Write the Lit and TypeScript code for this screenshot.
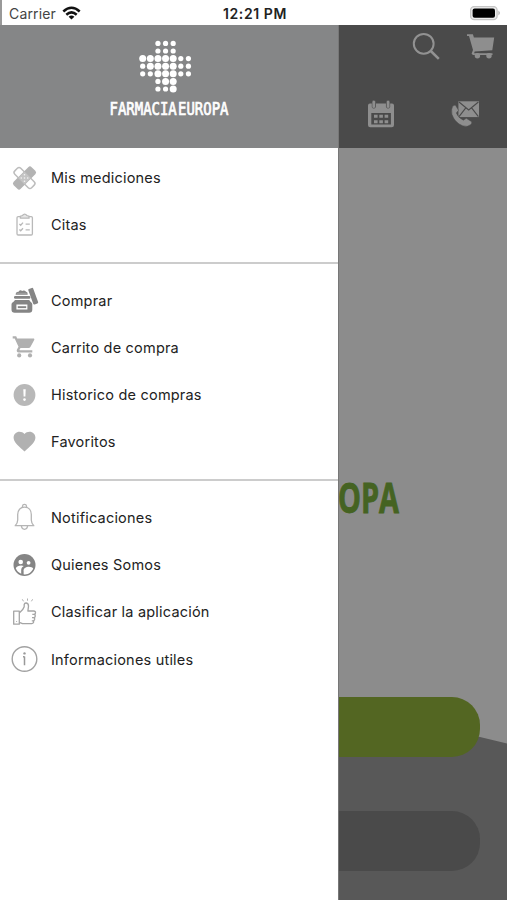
import { LitElement, html, svg, css } from "lit";
import { customElement } from "lit/decorators.js";

const bandage = svg`
  <g transform="rotate(45 16.5 16)" fill="none" stroke="#bdbdbd" stroke-width="1.5"><rect x="4.6" y="11.8" width="23.8" height="8.4" rx="2.4"/></g>
  <g transform="rotate(-45 16.5 16)"><rect x="3.8" y="11" width="25.4" height="10" rx="2.4" fill="#b3b3b3"/><rect x="12" y="11.4" width="9" height="9.2" fill="#c4c4c4"/></g>
  <g fill="#f4f4f4"><circle cx="16.5" cy="12.8" r=".8"/><circle cx="16.5" cy="19.2" r=".8"/><circle cx="13.3" cy="16" r=".8"/><circle cx="19.7" cy="16" r=".8"/><circle cx="16.5" cy="16" r=".8"/></g>`;
const clipboard = svg`
  <g fill="none" stroke="#b9b9b9" stroke-width="1.3"><rect x="9" y="7.6" width="15.4" height="18.4" rx="1.2"/>
  <path d="M12.4 9.2V7.2l2.1-.7Q16.6 3.9 18.9 6.5l2.1.7v2z" fill="#e6e6e6"/>
  <path d="M11.4 15l1.3 1.2 2.3-2.6M11.4 20.6l1.3 1.2 2.3-2.6M17.6 15.2h4.2M17.6 20.8h4.2"/></g>`;
const jar = svg`
  <g fill="#858585"><path fill-rule="evenodd" d="M7 16h14.2q1 1.7 2.4 2.8.7.7.7 1.8v5q0 3.2-3.2 3.2H6.7q-3.2 0-3.2-3.2v-5q0-1.1.7-1.8Q6 17.6 7 16zM8.4 20.6v5h11v-5z"/>
  <rect x="9.8" y="22.2" width="8.4" height="1.9"/><rect x="6" y="12.1" width="16.4" height="2.7" rx="1.2"/>
  <path d="M7.6 10.8q.2-3.4 3-3.1 1.5-2.2 3.5-.8 2.4-.9 4 .9 1.8.2 1.6 3z"/>
  <rect x="-2.6" y="-8.3" width="5.2" height="16.6" rx="1.1" transform="translate(25.2 12.2) rotate(-20)"/></g>
  <path d="M8.6 9.3h10" stroke="#aaa" stroke-width=".8"/>`;
const cart = svg`<g fill="#b0b0b0"><path d="M4.7 5.3h3.5l1 2.2h16.2c.9 0 1.2.7.8 1.4l-3.8 7c-.4.7-1 1.1-1.9 1.1h-8l-1 1.8c-.1.3 0 .5.3.5h12.500v2.2H10.700c-1.700 0-2.500-1.600-1.700-3l1.500-2.800L6.700 7.500h-2z"/><circle cx="11.200" cy="24.400" r="2.100"/><circle cx="22" cy="24.400" r="2.100"/></g>`;
const alert = svg`<circle cx="16.5" cy="16" r="10.9" fill="#b8b8b8"/><path d="M15.3 10.2h2.4l-.3 7.2h-1.8z" fill="#fff"/><circle cx="16.5" cy="20.6" r="1.3" fill="#fff"/>`;
const heart = svg`<path fill="#b1b1b1" d="M16.5 25.5l-1.6-1.4C9.3 19 5.6 15.7 5.6 11.6 5.6 8.3 8.2 5.7 11.5 5.7c1.9 0 3.8.9 5 2.3 1.2-1.4 3.1-2.3 5-2.3 3.3 0 5.9 2.6 5.9 5.9 0 4.1-3.7 7.4-9.3 12.5z"/>`;
const bell = svg`<g fill="none" stroke="#b5b5b5" stroke-width="1.3" stroke-linejoin="round"><path d="M7.2 24.7q2.4-2.1 2.5-5.7v-5.4c0-4.3 2.6-7.4 6.8-7.4s6.8 3.1 6.8 7.4V19q.1 3.6 2.5 5.7z"/><path d="M14.5 6.3V5q.2-1.7 2-1.7t2 1.7v1.3M13.4 25q.5 3.3 3.1 3.3t3.1-3.3"/></g>`;
const people = svg`<circle cx="16.5" cy="16" r="11" fill="#858585"/><g fill="#fff"><circle cx="12.7" cy="13" r="2.3"/><circle cx="20.6" cy="13.8" r="1.9"/>
  <path d="M7.8 19.3c.9-1.9 3-2.8 5.3-2.8 1.1 0 2 .2 2.6.5-2.1 1.2-2.5 2.9-2.5 4.3v3.4q-3.7-1.2-5.4-5.4z"/><path d="M15.6 21.4c0-2.3 2.8-3.6 5.3-3.6 2 0 3.7.7 4.3 1.7-1.3 3.4-4.5 5.9-8.2 5.9q-.8 0-1.4-.2z"/></g>`;
const thumb = svg`<g fill="none" stroke="#a5a5a5" stroke-width="1.3" stroke-linejoin="round"><rect x="5.7" y="15.2" width="5.6" height="13"/>
  <path d="M11.3 17q4-3.2 4.9-6.3V8.5q.4-1.7 2.1-1.5 2.3.5 2.2 3.2l-.6 4.8h5.7q2 .2 1.9 1.9-.1 1.2-1 1.5 1 .7.7 1.9-.2 1.1-1.1 1.4.8.7.5 1.8-.3 1-1.2 1.3.6.9.1 1.7-.5 1.1-1.8 1.1H14.5l-3.2-1.2"/>
  <path d="M24.3 18.4h2.5M24 21.7h2.3M23.8 24.9h1.6"/></g>
  <path d="M19.5 2.5v2.2M14.3 3.3l1.2 2M24.6 3.3l-1.2 2" stroke="#b0b0b0"/><circle cx="8.6" cy="25.5" r=".6" fill="#aaa"/>`;
const info = svg`<circle cx="16.5" cy="16" r="12.3" fill="none" stroke="#a2a2a2" stroke-width="1.4"/><path d="M16.5 13.6v8.6M15 13.8h1.5" stroke="#999" stroke-width="1.5" fill="none"/><circle cx="16.5" cy="10.4" r="1.2" fill="#999"/>`;

const sections = [
  [["Mis mediciones", bandage], ["Citas", clipboard]],
  [["Comprar", jar], ["Carrito de compra", cart], ["Historico de compras", alert], ["Favoritos", heart]],
  [["Notificaciones", bell], ["Quienes Somos", people], ["Clasificar la aplicación", thumb], ["Informaciones utiles", info]],
] as const;

/* 1 = small dot, 2 = large dot */
const dots = ["0011100", "0011100", "2222211", "1222211", "1122211", "0012200", "0011200"];

@customElement("app-root")
export class AppRoot extends LitElement {
  static styles = css`
    :host { display: block; height: 900px; overflow: hidden; font-family: Inter, "Liberation Sans", sans-serif; color: #222; }
    svg { display: block; }
    .status { height: 25px; box-sizing: border-box; display: grid; grid-template-columns: 1fr auto 1fr; align-items: center; background: #fff; border-left: 2px solid #999; padding: 1px 6px 0 7px; font-size: 14px; }
    .carrier { display: flex; align-items: center; gap: 6px; color: #444; letter-spacing: .15px; }
    .time { font-weight: 600; font-size: 14px; letter-spacing: .6px; color: #222; }
    .battery { justify-self: end; }
    .screen { position: relative; height: 875px; background: #8c8c8c; display: flex; flex-direction: column; align-items: flex-end; }
    .side { width: 169px; height: 875px; display: flex; flex-direction: column; }
    .top { height: 122.5px; background: #4a4a4a; flex: none; }
    .brand { height: 549px; box-sizing: border-box; display: flex; align-items: center; }
    .brand svg { margin-top: 155px; }
    .hill { flex: 1; position: relative; }
    .slope { position: absolute; inset: 0; }
    .buttons { position: relative; display: flex; flex-direction: column; gap: 53.5px; width: 142px; }
    .button { height: 60.7px; border-radius: 0 28px 28px 0; background: #4a4a4a; }
    .green { background: #536622; }
    .drawer { position: absolute; left: 0; top: 0; width: 338px; height: 875px; background: #fff; box-shadow: 1px 0 0 #777; }
    .head { height: 122.5px; background: #858687; }
    .list { padding-top: 6.4px; }
    .section + .section { margin-top: 13.2px; border-top: 2px solid #ccc; padding-top: 13px; }
    .item { height: 47.25px; display: flex; align-items: center; padding-left: 8px; gap: 11px; font-size: 14.5px; letter-spacing: .2px; color: #222; }
  `;

  render() {
    return html`
      <div class="status">
        <div class="carrier"><span>Carrier</span>
          <svg width="19" height="15" viewBox="0 0 19 15" fill="none" stroke="#111" stroke-width="2.5"><path d="M1.3 5.5Q9.5-2 17.7 5.5M4.3 8.7Q9.5 4 14.7 8.7"/><path d="M9.5 13.6L6.6 10.7Q9.5 8.5 12.4 10.7z" fill="#111" stroke="none"/></svg>
        </div>
        <div class="time">12:21 PM</div>
        <svg class="battery" width="31" height="15" viewBox="0 0 31 15"><rect x=".6" y=".6" width="26.5" height="13" rx="3.6" fill="#eee" stroke="#c6c6c6" stroke-width="1.4"/><rect x="2.6" y="2.4" width="22.4" height="9.4" rx="2" fill="#000"/><path d="M28.3 4.6q3.4 2.5 0 5z" fill="#bbb"/></svg>
      </div>
      <div class="screen">
        <div class="side">
          <div class="top">
            <svg width="169" height="122" viewBox="338 25 169 122" fill="#8e8e8e">
              <g fill="none" stroke="#929292"><circle cx="423.7" cy="43.8" r="9.9" stroke-width="2"/><path d="M430.8 51l8 7.9" stroke-width="2.5"/></g>
              <path d="M467 34.3h5.9l1 3.1h20.3l-1.900 12.900-17.600 1.300-.6 1.700h18.400v1.600H473l-1.400-1.100 1.400-3.800-4-14h-2z"/><circle cx="477.4" cy="55.7" r="2.7"/><circle cx="489" cy="55.7" r="2.7"/>
              <path fill-rule="evenodd" d="M370 103.5h2v3.3q1.7 2.8 4 0v-3.3h10v3.3q1.7 2.8 4 0v-3.3h2q2 0 2 2V125q0 2.2-2.2 2.2h-21.6q-2.2 0-2.2-2.2v-19.500q0-2 2-2zM371.3 113v11.5h19.6V113z"/><rect x="372.1" y="100.3" width="3.4" height="8" rx="1.6" stroke="#4a4a4a" stroke-width=".5"/><rect x="386.4" y="100.3" width="3.4" height="8" rx="1.6" stroke="#4a4a4a" stroke-width=".5"/>
              <path d="M374 114.8h3.6v3h-3.6zM379.3 114.8h3.6v3h-3.6zM384.6 114.8h3.6v3h-3.6zM374 120.2h3.6v3h-3.6zM379.3 120.2h3.6v3h-3.6zM384.6 120.2h3.6v3h-3.6z"/>
              <path d="M458.4 101.3H479v15.8h-20.6z"/><path d="M459 102l9.7 8 9.7-8M459 116.6l6.6-8.5M478.4 116.6l-6.6-8.5" fill="none" stroke="#4a4a4a" stroke-width="1.1"/>
              <path d="M453 105.8l2.3-.8 3.2 5.3-2.2 2.6q1.7 4.7 7 7.3l3-1.9 5.4 3.4q.5 1.3-.8 2.9-3.2 2.9-8.3 1.2-8-3.2-10.7-11.5-.9-5.7 1.1-8.5z" stroke="#4a4a4a" stroke-width=".5"/>
            </svg>
          </div>
          <div class="brand">
            <svg width="80" height="66" viewBox="0 -10 80 66"><text x="0" y="36.300" font-family="Open Sans, sans-serif" font-weight="700" font-size="41" textLength="61" lengthAdjust="spacingAndGlyphs" fill="#456322" stroke="#456322" stroke-width=".9">OPA</text></svg>
          </div>
          <div class="hill">
            <svg class="slope" width="169" height="204" viewBox="0 0 169 204"><path d="M0 24Q85 24 142 40L169 46.5V204H0z" fill="#585858"/></svg>
            <div class="buttons"><div class="button green"></div><div class="button"></div></div>
          </div>
        </div>
        <nav class="drawer">
          <div class="head">
            <svg width="338" height="122" viewBox="0 25 338 122" fill="#fff">
              ${dots.map((row, r) => [...row].map((d, c) => d === "0" ? null : svg`<circle cx=${142.7 + c * 7.62} cy=${43.4 + r * 7.6} r=${d === "2" ? 3.5 : 2.6}/>`))}
              <text x="109.5" y="115" font-family="DejaVu Sans Mono, monospace" font-size="17" stroke="#fff" stroke-width=".7" textLength="119" lengthAdjust="spacingAndGlyphs">FARMACIA<tspan dx="1.5">EUROPA</tspan></text>
            </svg>
          </div>
          <div class="list">
            ${sections.map((s) => html`<div class="section">${s.map(([label, icon]) => html`<div class="item"><svg width="32" height="32" viewBox="0 0 32 32">${icon}</svg><span>${label}</span></div>`)}</div>`)}
          </div>
        </nav>
      </div>`;
  }
}
